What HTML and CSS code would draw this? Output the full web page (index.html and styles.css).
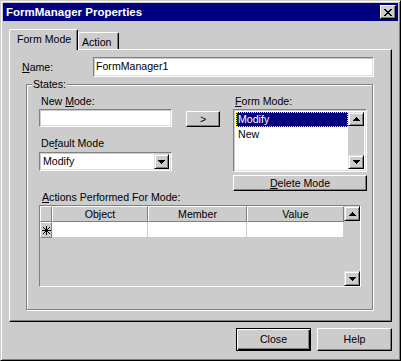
FILE: index.html
```html
<!DOCTYPE html>
<html>
<head>
  <title>FormManager Properties</title>
  <link rel="stylesheet" href="styles.css">
</head>
<body>
  <div class="window">
    <div class="titlebar">
      <span class="title">FormManager Properties</span>
      <span class="title-btn">
        <svg width="8" height="7" viewBox="0 0 8 7" shape-rendering="crispEdges">
          <path d="M0 0h2v1H0zM6 0h2v1H6zM1 1h2v1H1zM5 1h2v1H5zM2 2h4v1H2zM3 3h2v1H3zM2 4h4v1H2zM1 5h2v1H1zM5 5h2v1H5zM0 6h2v1H0zM6 6h2v1H6z" fill="#000"/>
        </svg>
      </span>
    </div>

    <div class="tabs">
      <div class="tab tab-active">Form Mode</div>
      <div class="tab tab-action">Action</div>
    </div>

    <div class="panel">
      <div class="name-row">
        <span class="name-label"><u>N</u>ame:</span>
        <div class="field name-field">FormManager1</div>
      </div>

      <div class="group">
        <span class="group-label">States:</span>

        <div class="states">
          <div class="col col-left">
            <span class="lbl lbl-top">New <u>M</u>ode:</span>
            <div class="field mode-field"></div>
            <span class="lbl lbl-default">De<u>f</u>ault Mode</span>
            <div class="field combo">
              <span class="combo-text">Modify</span>
              <span class="sb-btn combo-btn">
                <svg width="7" height="4" viewBox="0 0 7 4" shape-rendering="crispEdges"><path d="M0 0h7v1H0zM1 1h5v1H1zM2 2h3v1H2zM3 3h1v1H3z"/></svg>
              </span>
            </div>
          </div>

          <div class="col col-mid">
            <div class="btn btn-add">&gt;</div>
          </div>

          <div class="col col-right">
            <span class="lbl lbl-top"><u>F</u>orm Mode:</span>
            <div class="field listbox">
              <div class="list-items">
                <div class="item item-sel">Modify</div>
                <div class="item">New</div>
              </div>
              <div class="vscroll">
                <span class="sb-btn">
                  <svg width="7" height="4" viewBox="0 0 7 4" shape-rendering="crispEdges"><path d="M3 0h1v1H3zM2 1h3v1H2zM1 2h5v1H1zM0 3h7v1H0z"/></svg>
                </span>
                <span class="sb-btn">
                  <svg width="7" height="4" viewBox="0 0 7 4" shape-rendering="crispEdges"><path d="M0 0h7v1H0zM1 1h5v1H1zM2 2h3v1H2zM3 3h1v1H3z"/></svg>
                </span>
              </div>
            </div>
            <div class="btn btn-delete"><u>D</u>elete Mode</div>
          </div>
        </div>

        <span class="lbl lbl-actions"><u>A</u>ctions Performed For Mode:</span>
        <div class="grid">
          <div class="grid-body">
            <div class="grid-row">
              <span class="cell cell-head cell-ind"></span>
              <span class="cell cell-head cell-object">Object</span>
              <span class="cell cell-head cell-member">Member</span>
              <span class="cell cell-head cell-value">Value</span>
            </div>
            <div class="grid-row">
              <span class="cell cell-head cell-ind">
                <svg width="9" height="9" viewBox="0 0 9 9" shape-rendering="crispEdges">
                  <path d="M4 0h1v9H4zM0 4h9v1H0zM1 1h1v1H1zM2 2h1v1H2zM3 3h3v3H3zM6 2h1v1H6zM7 1h1v1H7zM2 6h1v1H2zM1 7h1v1H1zM6 6h1v1H6zM7 7h1v1H7z"/>
                </svg>
              </span>
              <span class="cell cell-data cell-object"></span>
              <span class="cell cell-data cell-member"></span>
              <span class="cell cell-data cell-value"></span>
            </div>
          </div>
          <div class="vscroll">
            <span class="sb-btn">
              <svg width="7" height="4" viewBox="0 0 7 4" shape-rendering="crispEdges"><path d="M3 0h1v1H3zM2 1h3v1H2zM1 2h5v1H1zM0 3h7v1H0z"/></svg>
            </span>
            <span class="sb-btn">
              <svg width="7" height="4" viewBox="0 0 7 4" shape-rendering="crispEdges"><path d="M0 0h7v1H0zM1 1h5v1H1zM2 2h3v1H2zM3 3h1v1H3z"/></svg>
            </span>
          </div>
        </div>
      </div>
    </div>

    <div class="footer">
      <div class="btn btn-dlg btn-default">Close</div>
      <div class="btn btn-dlg">Help</div>
    </div>
  </div>
</body>
</html>
```

FILE: styles.css
```css
/* Classic 3D dialog palette */
:root {
  --face: #cccccc;
  --shadow: #808080;
  --light: #dfdfdf;
  --navy: #000080;
}

* {
  margin: 0;
  padding: 0;
  box-sizing: border-box;
}

body {
  background: var(--face);
  color: #000;
  font-family: "Liberation Sans", Arial, sans-serif;
  font-size: 10.6px;
  line-height: 13px;
}

u {
  text-underline-offset: 1px;
}

svg {
  display: block;
}

/* Window frame */
.window {
  width: 401px;
  height: 361px;
  display: flex;
  flex-direction: column;
  padding: 2px;
  border: 1px solid;
  border-color: var(--face) #000 #000 var(--face);
  box-shadow: inset 1px 1px #fff, inset -1px -1px var(--shadow);
}

.titlebar {
  flex: none;
  height: 18px;
  display: flex;
  align-items: center;
  justify-content: space-between;
  padding: 0 2px 0 3px;
  background: var(--navy);
  color: #fff;
}

.title {
  font-size: 11.5px;
  font-weight: bold;
}

.title-btn {
  width: 16px;
  height: 14px;
  display: flex;
  align-items: center;
  justify-content: center;
  background: var(--face);
  border: 1px solid;
  border-color: #fff #000 #000 #fff;
  box-shadow: inset -1px -1px var(--shadow);
}

/* Tabs */
.tabs {
  flex: none;
  height: 20px;
  display: flex;
  align-items: flex-end;
  margin: 8px 6px 0;
}

.tab {
  height: 17px;
  padding: 3px 6px 0 3px;
  white-space: nowrap;
  background: var(--face);
  border: 1px solid;
  border-bottom: none;
  border-color: #fff #000 #000 #fff;
  border-radius: 2px 2px 0 0;
  box-shadow: inset -1px 0 var(--shadow);
}

.tab-active {
  position: relative;
  z-index: 1;
  width: 69px;
  height: 21px;
  margin-bottom: -1px;
  padding-left: 7px;
  padding-right: 0;
}

.tab-action {
  width: 41px;
}

.panel {
  flex: none;
  height: 273px;
  margin: 0 6px;
  padding: 7px 0 0 12px;
  border: 1px solid;
  border-color: #fff #000 #000 #fff;
  box-shadow: inset -1px -1px var(--shadow);
}

/* Fields */
.field {
  background: #fff;
  border: 1px solid;
  border-color: var(--shadow) #fff #fff var(--shadow);
  box-shadow: inset 1px 1px var(--face), inset -1px -1px var(--light);
}

.name-row {
  height: 20px;
  display: flex;
  align-items: center;
}

.name-label {
  width: 71px;
}

.name-field {
  width: 281px;
  height: 20px;
  padding: 2px 0 0 2px;
}

/* States group */
.group {
  position: relative;
  width: 347px;
  height: 226px;
  margin: 7px 0 0 4px;
  padding-left: 12px;
  border: 1px solid var(--shadow);
  box-shadow: 1px 1px #fff, inset 1px 1px #fff;
}

.group-label {
  position: absolute;
  top: -7px;
  left: 5px;
  padding: 0 1px;
  background: var(--face);
}

.states {
  display: flex;
}

.col {
  display: flex;
  flex-direction: column;
}

.col-left {
  width: 133px;
}

.col-mid {
  width: 34px;
  margin-left: 14px;
}

.col-right {
  width: 134px;
  margin-left: 13px;
}

.lbl {
  padding-left: 2px;
}

.lbl-top {
  margin-top: 10px;
}

.mode-field {
  height: 18px;
  margin-top: 1px;
}

.lbl-default {
  margin-top: 10px;
}

.combo {
  height: 19px;
  margin-top: 2px;
  display: flex;
  align-items: center;
  justify-content: space-between;
  padding: 2px;
}

.combo-text {
  padding-left: 1px;
}

.combo-btn {
  width: 15px;
  height: 15px;
}

/* Buttons */
.btn {
  display: flex;
  align-items: center;
  justify-content: center;
  background: var(--face);
  border: 1px solid;
  border-color: #fff #000 #000 #fff;
  box-shadow: inset -1px -1px var(--shadow);
}

.btn-add {
  height: 16px;
  margin-top: 26px;
}

.btn-delete {
  height: 16px;
  margin-top: 3px;
}

.sb-btn {
  display: flex;
  align-items: center;
  justify-content: center;
  background: var(--face);
  border: 1px solid;
  border-color: var(--light) #000 #000 var(--light);
  box-shadow: inset 1px 1px #fff, inset -1px -1px var(--shadow);
}

/* List box */
.listbox {
  height: 63px;
  margin-top: 1px;
  display: flex;
  padding: 2px;
}

.list-items {
  flex: 1;
}

.item {
  height: 15px;
  padding: 1px 0 0 2px;
}

.item-sel {
  padding: 0 0 0 1px;
  background: var(--navy);
  color: #fff;
  border: 1px dotted #ffff00;
}

.vscroll {
  width: 16px;
  display: flex;
  flex-direction: column;
  justify-content: space-between;
  background: var(--face);
}

.vscroll .sb-btn {
  height: 14px;
}

/* Actions grid */
.lbl-actions {
  margin-top: 6px;
  padding-left: 3px;
}

.grid {
  width: 322px;
  height: 82px;
  margin-top: 1px;
  display: flex;
  border: 1px solid;
  border-color: var(--shadow) #fff #fff var(--shadow);
}

.grid-body {
  flex: 1;
}

.grid-row {
  display: flex;
  height: 16px;
}

.cell {
  display: flex;
  align-items: center;
  justify-content: center;
}

.cell-head {
  background: var(--face);
  border: 1px solid;
  border-color: #fff var(--shadow) var(--shadow) #fff;
}

.cell-data {
  background: #fff;
  border-right: 1px solid var(--face);
  border-bottom: 1px solid var(--face);
}

.cell-ind {
  width: 12px;
}

.cell-object {
  width: 96px;
}

.cell-member {
  width: 99px;
}

.cell-value {
  width: 97px;
}

.grid .vscroll .sb-btn {
  height: 15px;
}

/* Dialog buttons */
.footer {
  flex: none;
  display: flex;
  justify-content: flex-end;
  gap: 6px;
  margin-top: 6px;
  padding-right: 6px;
}

.btn-dlg {
  width: 75px;
  height: 23px;
}

.btn-default {
  border-color: #000;
  box-shadow: inset 1px 1px #fff, inset -1px -1px #000, inset -2px -2px var(--shadow);
}
```
